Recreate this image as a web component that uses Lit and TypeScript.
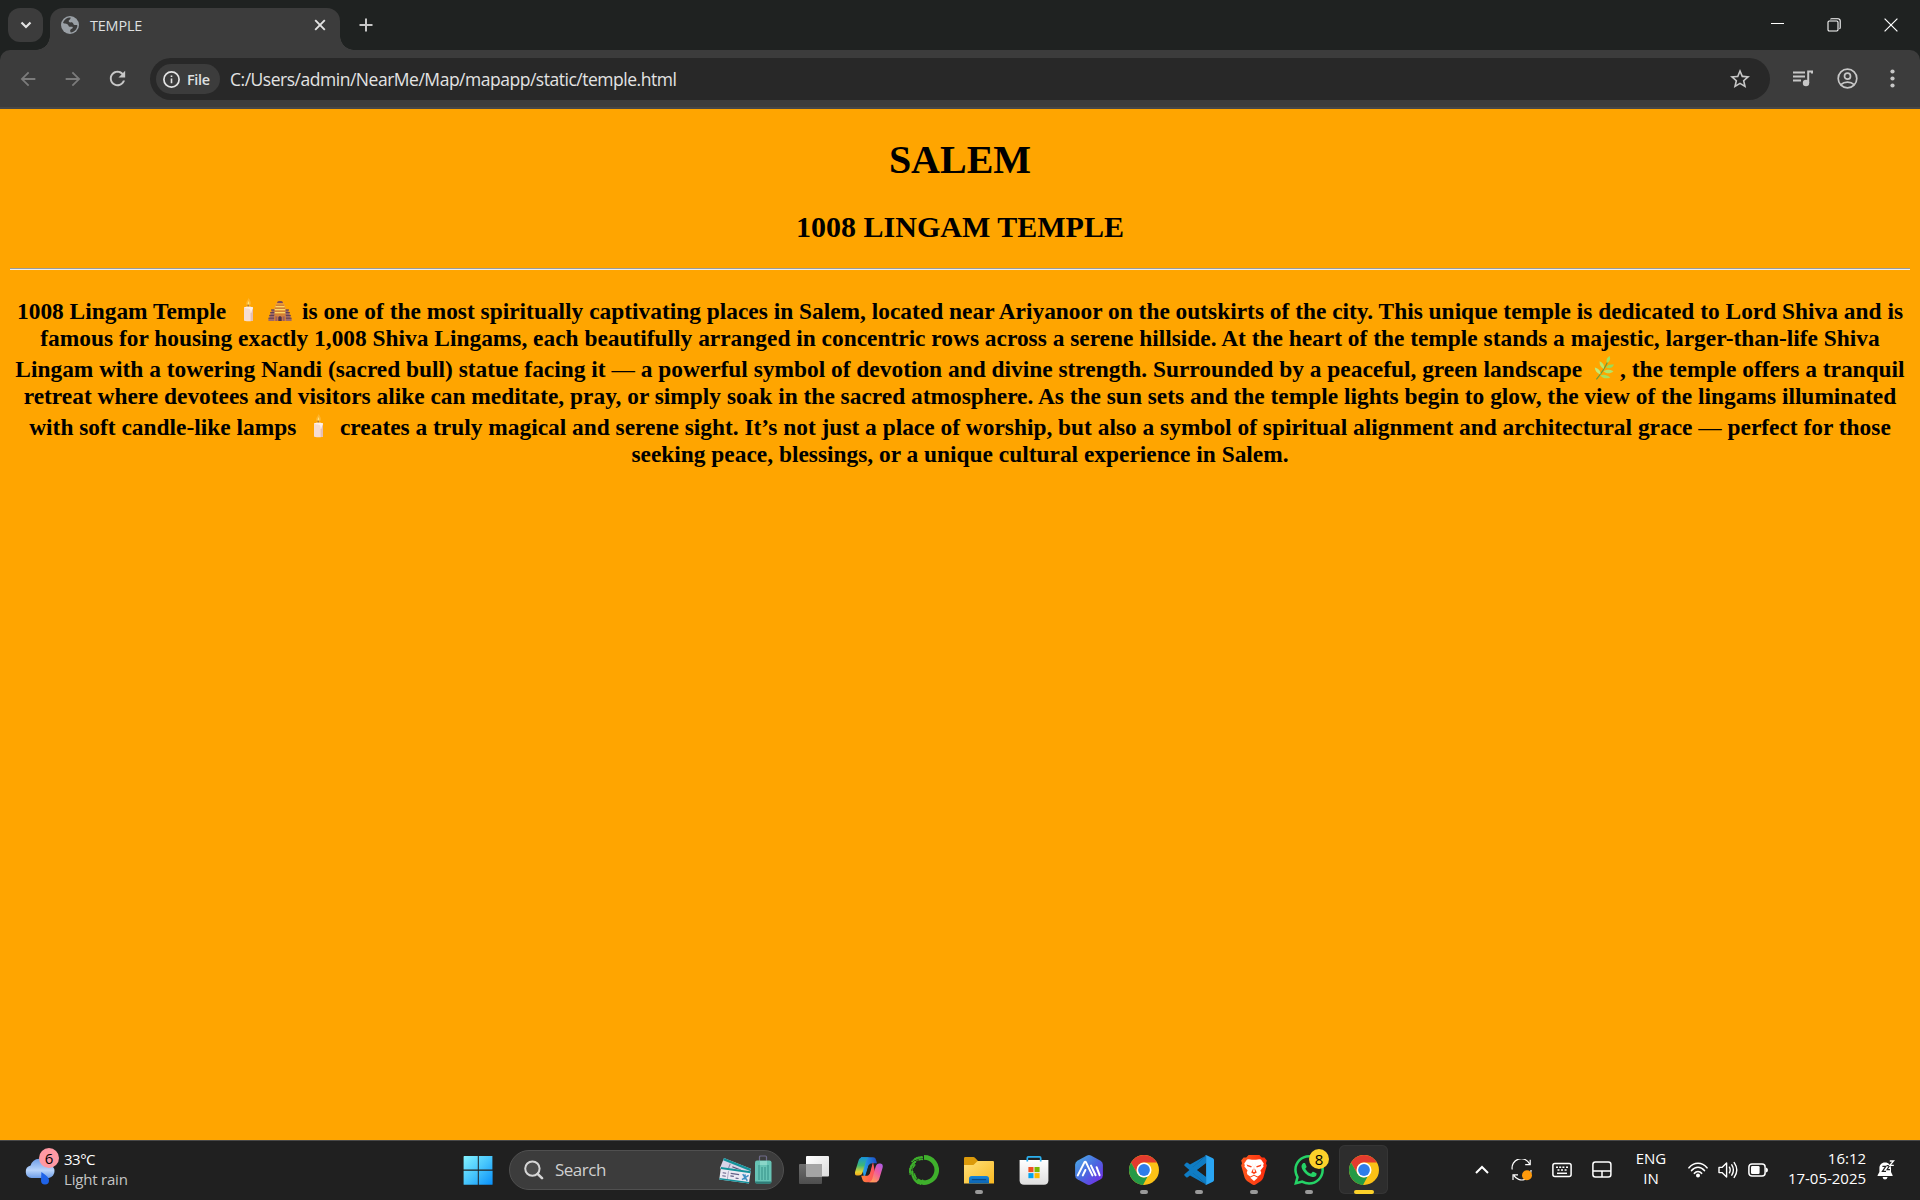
import { LitElement, html, css, svg } from "lit";
import { customElement } from "lit/decorators.js";

const candle = () => html`<svg class="emoji" viewBox="0 0 32 24">
  <path d="M16.5 0C18.6 3.2 19.6 4.6 18.6 6.6 17.8 8.2 15.2 8.2 14.4 6.6 13.4 4.4 15.6 3 16.5 0Z" fill="#ffb42e"/>
  <path d="M16.5 3C17.6 5 17.6 6.4 16.5 7 15.3 6.4 15.5 5 16.5 3Z" fill="#ffe27a"/>
  <path d="M16.2 6.5V9.5" stroke="#8a5a3c" stroke-width=".9"/>
  <path d="M12 9.6C12 8.4 21 8.4 21 9.6V22.4C21 23.4 12 23.4 12 22.4Z" fill="#f6ddd3"/>
  <path d="M18.6 9V23H20.4L21 22.4V9.6Z" fill="#e5bfb4"/>
  <path d="M12 9.6C13 10.6 17 10.4 18 11.4 18.6 12.4 18.2 15 19 15 19.8 15 19.6 12 21 10.2V9.6C21 8.4 12 8.4 12 9.6Z" fill="#fff0e8"/>
</svg>`;

const temple = () => html`<svg class="emoji" viewBox="0 0 32 24">
  <path d="M16 0L17.1 3H14.9Z" fill="#f5a70c"/>
  <path d="M13.2 4.2C13.2 2.6 18.8 2.6 18.8 4.2V5.4H13.2Z" fill="#7a4a5c"/>
  <path d="M12 5.2H20L22 10.5V19H10V10.5Z" fill="#f3a23a"/>
  <path d="M11.6 8.6H20.4M10.6 11.6H21.4M10 14.6H22" stroke="#ffd766" stroke-width="1.4"/>
  <path d="M11.8 7.2H20.2M10.8 10.2H21.2M10.2 13.2H21.8M10 16.2H22" stroke="#b8662e" stroke-width=".8"/>
  <path d="M7.6 11.5H10.4V23H4.4V20.5H5.4V17.5H6.4V14.5H7.6ZM24.4 11.5H21.6V23H27.6V20.5H26.6V17.5H25.6V14.5H24.4Z" fill="#a06a68"/>
  <path d="M7 12H10.4M6.2 14.6H10.4M5.2 17.4H10.4M4.4 20.2H10.4M21.6 12H25M21.6 14.6H25.8M21.6 17.4H26.8M21.6 20.2H27.6" stroke="#5d3a50" stroke-width="1"/>
  <path d="M10.4 17.2H21.6V23H10.4Z" fill="#cf7b40"/>
  <path d="M11.4 18.4H13.2V23H11.4ZM18.8 18.4H20.6V23H18.8Z" fill="#9d5f60"/>
  <path d="M14.3 23V19.8C14.3 17.8 17.7 17.8 17.7 19.8V23Z" fill="#4d3149"/>
</svg>`;

const herb = () => html`<svg class="emoji" viewBox="0 0 32 24">
  <path d="M8.4 23.4C12 19 16 14 19.6 6" stroke="#6f9a35" stroke-width="1.2" fill="none"/>
  <path d="M19 7C17.6 3.6 19.4 1.4 21.6 0 22.8 3 22 5.6 19 7Z" fill="#a9e05a"/>
  <path d="M18 11.4C20 8.4 22.8 8.2 26 8.6 24.6 12 21.6 13 18 11.4Z" fill="#9ddb55"/>
  <path d="M15.6 15.4C18.4 13.4 21.6 13.4 25.4 15.2 22.4 18 19 18 15.6 15.4Z" fill="#b5e566"/>
  <path d="M12.2 19.4C15.4 18 18.4 18.4 22.4 21.4 18.6 23.2 15 22.4 12.2 19.4Z" fill="#a9e05a"/>
  <path d="M16 12.8C12.6 11.4 11.4 8.8 11.6 5.2 15 6.8 16.6 9.2 16 12.8Z" fill="#b9e86c"/>
  <path d="M12.4 18.4C8.8 17 7 14.6 6.8 11.4 10.6 12.4 12.8 14.8 12.4 18.4Z" fill="#c2ec77"/>
</svg>`;

const chrome = () => html`<svg class="app" viewBox="0 0 30 30">
  <circle cx="15" cy="15" r="15" fill="#fbc116"/>
  <path d="M2.01 7.5A15 15 0 0 1 27.99 7.5H15A7.5 7.5 0 0 0 8 12.2L7.8 17.5Z" fill="#e33b2e"/>
  <path d="M2.01 7.5L8.5 18.75A7.5 7.5 0 0 0 15 22.5L18.6 21.6 14 29.97A15 15 0 0 1 2.01 7.5Z" fill="#249a46"/>
  <circle cx="15" cy="15" r="7.5" fill="#fff"/>
  <circle cx="15" cy="15" r="5.9" fill="#2f7de9"/>
</svg>`;

const start = () => html`<svg class="app" viewBox="0 0 30 30">
  <defs><linearGradient id="ws" gradientUnits="userSpaceOnUse" x1="1" y1="1" x2="29" y2="29">
    <stop offset="0" stop-color="#83f2ff"/><stop offset=".5" stop-color="#48c6fc"/><stop offset="1" stop-color="#0b92fa"/></linearGradient></defs>
  <path d="M1.2.9H14.8V14.6H.6V1.5ZM15.8.9H29.4V14.6H15.8ZM.6 15.7H14.8V29.8H.9L.6 29.4ZM15.8 15.7H29.6V29.4L29.2 29.8H15.8Z" fill="url(#ws)"/>
</svg>`;

const taskView = () => html`<svg class="app" viewBox="0 0 30 30">
  <defs><linearGradient id="tv" x1="0" y1="0" x2="1" y2="1"><stop offset="0" stop-color="#fff"/><stop offset="1" stop-color="#dcdcdc"/></linearGradient>
  <linearGradient id="tg" x1="0" y1="0" x2="0" y2="1"><stop offset="0" stop-color="#6e6e6e"/><stop offset="1" stop-color="#4e4e4e"/></linearGradient></defs>
  <rect x="0" y="9" width="23" height="20" rx="1" fill="url(#tg)"/>
  <rect x="7" y="1" width="23" height="20.5" rx="1" fill="url(#tv)"/>
  <rect x="7" y="9" width="16" height="12.5" fill="#a5a5a5"/>
</svg>`;

const copilot = () => html`<svg class="app" viewBox="0 0 30 30">
  <defs>
    <linearGradient id="c1" x1="0" y1="0" x2="0" y2="1"><stop offset="0" stop-color="#1695dc"/><stop offset=".45" stop-color="#3fb873"/><stop offset=".8" stop-color="#e8d22e"/><stop offset="1" stop-color="#f2a51c"/></linearGradient>
    <linearGradient id="c2" x1="1" y1="0" x2=".3" y2="1"><stop offset="0" stop-color="#a45cf0"/><stop offset=".5" stop-color="#ee5ba0"/><stop offset="1" stop-color="#ff9b58"/></linearGradient>
    <linearGradient id="c3" x1="0" y1="0" x2="1" y2="0"><stop offset="0" stop-color="#28b2ef"/><stop offset="1" stop-color="#1c49c5"/></linearGradient>
    <linearGradient id="c4" x1="0" y1="0" x2="1" y2="0"><stop offset="0" stop-color="#ff8034"/><stop offset="1" stop-color="#ff4769"/></linearGradient>
  </defs>
  <path d="M7 2.2H19C21 2.2 21.6 3.4 22.2 5.4L23 8.2H18.4C16 8.2 15 9.4 14.4 11.5L10 24Z" fill="url(#c3)"/>
  <path d="M23 27.2H12C9.8 27.2 9 26.2 8.2 24L7.2 20.8H12C14 20.8 15.2 20 16 18L19 7Z" fill="url(#c4)"/>
  <path d="M14.4 10.6L17.8 9 15.6 18.6 12 20.6Z" fill="#202020"/>
  <path d="M9 2.2H15.4C13.4 2.8 12.6 4 12 6L8.8 16.8C8 19.6 7 20.6 4.6 20.6H3C1 20.6.6 18.6 1.2 16.4L4.4 6C5.2 3.4 6.4 2.2 9 2.2Z" fill="url(#c1)"/>
  <path d="M21 27.2H15.2C17.2 26.6 17.8 25.6 18.4 23.6L21.4 12.6C22.2 9.8 23.2 8.4 25.4 8.4H26.4C28.6 8.4 29.2 10.6 28.6 12.8L25.4 23.6C24.6 26.2 23.4 27.2 21 27.2Z" fill="url(#c2)"/>
</svg>`;

const dots = Array.from({ length: 76 }, (_, i) => {
  const a = ((96 + ((i * 37) % 170)) * Math.PI) / 180;
  const r = 10.4 + ((i * 29) % 43) / 10;
  return svg`<circle cx=${15 + Math.cos(a) * r} cy=${15 + Math.sin(a) * r} r=${0.6 + (i % 3) * 0.3}></circle>`;
});
const anaconda = () => html`<svg class="app" viewBox="0 0 30 30">
  <path d="M15 2.4A12.6 12.6 0 1 1 8 25.4" fill="none" stroke="#3fb02c" stroke-width="4.6"/>
  <g fill="#3fb02c">${dots}</g>
</svg>`;

const explorer = () => html`<svg class="app" viewBox="0 0 30 30">
  <defs><linearGradient id="fe" x1="0" y1="0" x2="1" y2="1"><stop offset="0" stop-color="#ffe07a"/><stop offset="1" stop-color="#f9b921"/></linearGradient>
  <linearGradient id="fb" x1="0" y1="0" x2="0" y2="1"><stop offset="0" stop-color="#1686dc"/><stop offset="1" stop-color="#0c62ae"/></linearGradient></defs>
  <path d="M0 3.4C0 2.5.7 2 1.6 2H9.2C10 2 10.6 2.3 11.2 3L14 6V10H0Z" fill="#dc9a0a"/>
  <path d="M0 10H8.6C9.6 10 10 9.6 10.8 8.8L12.6 7C13 6.3 13.6 6 14.6 6H28.6C29.5 6 30 6.5 30 7.4V28.6H0Z" fill="url(#fe)"/>
  <path d="M5 28.6V23.6C5 22 6 21 7.6 21H22.4C24 21 25 22 25 23.6V28.6Z" fill="url(#fb)"/>
  <path d="M8.4 24.7H21.6" stroke="#0a4a86" stroke-width="1.3" stroke-linecap="round"/>
</svg>`;

const store = () => html`<svg class="app" viewBox="0 0 30 30">
  <defs><linearGradient id="st" x1="0" y1="0" x2="0" y2="1"><stop offset="0" stop-color="#fff"/><stop offset="1" stop-color="#dedede"/></linearGradient></defs>
  <path d="M.6 5H29.4V25.4C29.4 28.2 27.6 29.8 25 29.8H5C2.4 29.8.6 28.2.6 25.4Z" fill="url(#st)"/>
  <path d="M8.3 6.6V2.9C8.3 2.2 8.7 1.8 9.4 1.8H20.6C21.3 1.8 21.7 2.2 21.7 2.9V6.6" fill="none" stroke="#2bb0ee" stroke-width="1.7"/>
  <path d="M9.4 12H14.5V17.1H9.4Z" fill="#f05022"/><path d="M15.5 12H20.6V17.1H15.5Z" fill="#7db700"/>
  <path d="M9.4 18.1H14.5V23.2H9.4Z" fill="#00a3ee"/><path d="M15.5 18.1H20.6V23.2H15.5Z" fill="#fdb800"/>
</svg>`;

const hexApp = () => html`<svg class="app" viewBox="0 0 30 30">
  <defs><linearGradient id="hx" x1="0" y1="0" x2="1" y2="1"><stop offset="0" stop-color="#4db3e8"/><stop offset=".5" stop-color="#4a68e0"/><stop offset="1" stop-color="#7a22e8"/></linearGradient></defs>
  <path d="M12.6.7Q15-.5 17.4.7L26.6 5.8Q28.9 7.2 28.9 9.8V20.2Q28.9 22.8 26.6 24.2L17.4 29.3Q15 30.5 12.6 29.3L3.4 24.2Q1.1 22.8 1.1 20.2V9.8Q1.1 7.2 3.4 5.8Z" fill="url(#hx)"/>
  <path d="M3.8 20.4L10.4 7.4Q11.2 6.2 12 7.4L18.4 20.4M8.8 20.4L11.4 15M17 10.6L21.6 20.2M22.6 12.2L25.6 20.2" fill="none" stroke="#fff" stroke-width="2" stroke-linecap="round" stroke-linejoin="round"/>
</svg>`;

const vscode = () => html`<svg class="app" viewBox="0 0 30 30">
  <path d="M22.1.4L9.3 12.1 3.7 7.8Q2.9 7.2 2.2 7.8L.5 9.4Q-.1 10.1.5 10.8L22.1 29.6V21.8L6 9.6Z" fill="#0f7cc4"/>
  <path d="M22.1 29.6L9.3 17.9 3.7 22.2Q2.9 22.8 2.2 22.2L.5 20.6Q-.1 19.9.5 19.2L22.1.4V8.2L6 20.4Z" fill="#0f7cc4"/>
  <path d="M22.1 8.2V21.8L13.1 15Z" fill="#202020"/>
  <path d="M21.2.2Q21.8-.1 22.5.2L28.9 3.3Q30 3.9 30 5V25Q30 26.1 28.9 26.7L22.5 29.8Q21.6 30.2 20.9 29.5 22.1 29.9 22.1 28.4V1.6Q22.1.1 20.9.5Z" fill="#29a5f3"/>
</svg>`;

const brave = () => html`<svg class="app" viewBox="0 0 30 30">
  <defs><linearGradient id="br" x1="0" y1="0" x2="1" y2="0"><stop offset="0" stop-color="#ff5a1f"/><stop offset="1" stop-color="#fb2b0c"/></linearGradient></defs>
  <path d="M9.6 0H20.4L22.8 2.6 25.4 2.4 27.8 5.6 27 8.2 27.8 10.4 24.4 22.6Q23.8 24.6 22 25.9L16.6 29.5Q15 30.6 13.4 29.5L8 25.9Q6.2 24.6 5.6 22.6L2.2 10.4 3 8.2 2.2 5.6 4.6 2.4 7.2 2.6Z" fill="url(#br)"/>
  <path d="M9.8 4.2L13 4.8H17L20.2 4.2 22 4.6 24.8 8.6 24.2 10.2 24.6 11.4 21.4 15.4 22.2 17.6 21.6 19.6 18.8 21.4 16 20.2 15 19.6 14 20.2 11.2 21.4 8.4 19.6 7.8 17.6 8.6 15.4 5.4 11.4 5.8 10.2 5.2 8.6 8 4.6Z" fill="#fff"/>
  <path d="M7.6 9.4L12.8 11.2 12.2 12.6 8.4 11.2ZM22.4 9.4L17.2 11.2 17.8 12.6 21.6 11.2ZM13.6 7L14.2 13.6 12.2 17.6 15 19 17.8 17.6 15.8 13.6 16.4 7 15.6 14.6 16 16.6 15 17.2 14 16.6 14.4 14.6Z" fill="#fb3d15"/>
  <path d="M15 20.8L18.8 22.8 15 26 11.2 22.8Z" fill="#fff"/>
</svg>`;

const whatsapp = () => html`<svg class="app" viewBox="0 0 24 24"><path fill="#25d366" d="M17.472 14.382c-.297-.149-1.758-.867-2.03-.967-.273-.099-.471-.148-.67.15-.197.297-.767.966-.94 1.164-.173.199-.347.223-.644.075-.297-.15-1.255-.463-2.39-1.475-.883-.788-1.48-1.761-1.653-2.059-.173-.297-.018-.458.13-.606.134-.133.298-.347.446-.52.149-.174.198-.298.298-.497.099-.198.05-.371-.025-.52-.075-.149-.669-1.612-.916-2.207-.242-.579-.487-.5-.669-.51-.173-.008-.371-.01-.57-.01-.198 0-.52.074-.792.372-.272.297-1.04 1.016-1.04 2.479 0 1.462 1.065 2.875 1.213 3.074.149.198 2.096 3.2 5.077 4.487.709.306 1.262.489 1.694.625.712.227 1.36.195 1.871.118.571-.085 1.758-.719 2.006-1.413.248-.694.248-1.289.173-1.413-.074-.124-.272-.198-.57-.347m-5.421 7.403h-.004a9.87 9.87 0 01-5.031-1.378l-.361-.214-3.741.982.998-3.648-.235-.374a9.86 9.86 0 01-1.51-5.26c.001-5.45 4.436-9.884 9.888-9.884 2.64 0 5.122 1.03 6.988 2.898a9.825 9.825 0 012.893 6.994c-.003 5.45-4.437 9.884-9.885 9.884m8.413-18.297A11.815 11.815 0 0012.05 0C5.495 0 .16 5.335.157 11.892c0 2.096.547 4.142 1.588 5.945L.057 24l6.305-1.654a11.882 11.882 0 005.683 1.448h.005c6.554 0 11.89-5.335 11.893-11.893a11.821 11.821 0 00-3.48-8.413z"/></svg>`;

@customElement("browser-chrome")
class BrowserChrome extends LitElement {
  static styles = css`
    :host { display: flex; flex-direction: column; height: 109px; flex: none; background: #1f2221;
      font-family: "Open Sans", "Noto Sans", sans-serif; color: #dfe0e0; }
    svg { display: block; }
    .strip { display: flex; height: 50px; flex: none; }
    .menu { width: 35px; height: 34px; margin: 8px 7px 0 8px; border-radius: 12px; background: #3c3c3c;
      display: flex; align-items: center; justify-content: center; }
    .tab { position: relative; width: 290px; box-sizing: border-box; height: 42px; margin-top: 8px; border-radius: 13px 13px 0 0;
      background: #3c3c3c; display: flex; align-items: center; padding: 0 14px 8px 11px; }
    .tab::before, .tab::after { content: ""; position: absolute; bottom: 0; width: 14px; height: 14px; }
    .tab::before { left: -14px; background: radial-gradient(circle at 0 0, transparent 13.5px, #3c3c3c 14px); }
    .tab::after { right: -14px; background: radial-gradient(circle at 100% 0, transparent 13.5px, #3c3c3c 14px); }
    .title { flex: 1; margin: 1px 0 0 11px; font-size: 14.4px; line-height: 20px; letter-spacing: -0.15px; }
    .plus { margin: 18px 0 0 19px; }
    .controls { margin-left: auto; display: flex; height: 49px; align-items: center; }
    .ctl { width: 57px; display: flex; justify-content: center; }
    .restore { padding-right: 1px; width: 56px; margin-right: -1px; }
    .close { padding-right: 1px; width: 56px; margin-left: 1px; }
    .bar { flex: 1; display: flex; align-items: center; background: #3c3c3c; border-radius: 10px 10px 0 0;
      padding: 0 5px; border-bottom: 2px solid #474747; }
    .cell { width: 45px; display: flex; justify-content: center; }
    .omni { flex: 1; height: 42px; margin: 1px 10px 0 10px; border-radius: 21px; background: #282828; display: flex;
      align-items: center; padding: 0 19px 0 6px; box-sizing: border-box; }
    .chip { width: 64px; height: 30px; border-radius: 15px; background: #3c3c3c; display: flex; align-items: center;
      padding-left: 7px; box-sizing: border-box; gap: 7px; font-size: 14.4px; font-weight: 600; letter-spacing: -0.3px; }
    .url { flex: 1; margin-left: 10px; font-size: 17.5px; letter-spacing: -0.48px; color: #e3e3e3; white-space: nowrap; }
  `;
  render() {
    return html`
      <div class="strip">
        <div class="menu"><svg width="12" height="8" viewBox="0 0 12 8"><path d="M1.5 1.5L6 6 10.5 1.5" fill="none" stroke="#e3e3e3" stroke-width="2.2"/></svg></div>
        <div class="tab">
          <svg width="18" height="18" viewBox="0 0 18 18"><circle cx="9" cy="9" r="9" fill="#9aa0a6"/><path d="M9.6 1.6C7 1.2 3.4 3.2 2 6.6 3 8.4 5 7.6 6.4 8.2 7.8 8.8 7.2 10.6 8.8 10.8 10 11 11.6 10.4 11.8 11.6 12 13 9.6 12.8 9.2 14.2 9 15.2 9.6 16 9.8 16.4 13.4 16 16.2 13 16.4 9.4 15.4 8.4 14.4 9.4 13 8.8 12 8.2 12.6 6.8 11.2 6.4 10 6.2 8.4 6.8 7.8 5.6 7.2 4 9.8 4 9.6 1.6Z" fill="#3c3c3c"/><path d="M1.6 9.6C2.6 9.2 5 9.8 5.4 11 5.8 12.4 7 13 6.8 15.8 3.8 15 1.8 12.4 1.6 9.6Z" fill="#9aa0a6"/></svg>
          <span class="title">TEMPLE</span>
          <svg width="12" height="12" viewBox="0 0 12 12"><path d="M1.2 1.2L10.8 10.8M10.8 1.2L1.2 10.8" stroke="#e3e3e3" stroke-width="1.9"/></svg>
        </div>
        <svg class="plus" width="14" height="14" viewBox="0 0 14 14"><path d="M7 .5V13.5M.5 7H13.5" stroke="#c7c7c7" stroke-width="2"/></svg>
        <div class="controls">
          <div class="ctl"><svg width="13" height="13" viewBox="0 0 13 13"><path d="M0 5.5H13" stroke="#fff" stroke-width="1"/></svg></div>
          <div class="ctl restore"><svg width="14" height="14" viewBox="0 0 14 14"><rect x="1" y="3" width="10" height="10" rx="1.2" fill="none" stroke="#fff" stroke-width="1.1"/><path d="M3.5 1.4Q3.8.7 4.6.7H11Q13.2.7 13.2 3V9.5Q13.2 10.5 12.4 10.8" fill="none" stroke="#fff" stroke-width="1.1"/></svg></div>
          <div class="ctl close"><svg width="14" height="14" viewBox="0 0 14 14"><path d="M.6.6L13.4 13.4M13.4.6L.6 13.4" stroke="#fff" stroke-width="1.2"/></svg></div>
        </div>
      </div>
      <div class="bar">
        <div class="cell"><svg width="22" height="22" viewBox="0 0 24 24"><path fill="#7b7b7b" d="M20 11H7.83l5.59-5.59L12 4l-8 8 8 8 1.41-1.41L7.83 13H20v-2z"/></svg></div>
        <div class="cell"><svg width="22" height="22" viewBox="0 0 24 24"><path fill="#7b7b7b" d="M12 4l-1.41 1.41L16.17 11H4v2h12.17l-5.58 5.59L12 20l8-8z"/></svg></div>
        <div class="cell"><svg width="23" height="23" viewBox="0 0 24 24"><path fill="#c7c7c7" d="M17.65 6.35C16.2 4.9 14.21 4 12 4c-4.42 0-7.99 3.58-7.99 8s3.57 8 7.99 8c3.73 0 6.84-2.55 7.73-6h-2.08c-.82 2.33-3.04 4-5.65 4-3.31 0-6-2.69-6-6s2.69-6 6-6c1.66 0 3.14.69 4.22 1.78L13 11h7V4l-2.35 2.35z"/></svg></div>
        <div class="omni">
          <div class="chip"><svg width="17" height="17" viewBox="0 0 17 17"><circle cx="8.5" cy="8.5" r="7.6" fill="none" stroke="#e3e3e3" stroke-width="1.7"/><path d="M8.5 7.4V12.3M8.5 4.4V6" stroke="#e3e3e3" stroke-width="1.6"/></svg><span>File</span></div>
          <span class="url">C:/Users/admin/NearMe/Map/mapapp/static/temple.html</span>
          <svg width="22" height="22" viewBox="1 1 22 22"><path fill="#c7c7c7" d="M22 9.24l-7.19-.62L12 2 9.19 8.63 2 9.24l5.46 4.73L5.82 21 12 17.27 18.18 21l-1.63-7.03L22 9.24zM12 15.4l-3.76 2.27 1-4.28-3.32-2.88 4.38-.38L12 6.1l1.71 4.04 4.38.38-3.32 2.88 1 4.28L12 15.4z"/></svg>
        </div>
        <div class="cell"><svg width="21" height="18" viewBox="0 0 21 18"><path d="M1 2.5H13M1 6.5H13M1 10.5H9" stroke="#c7c7c7" stroke-width="1.9"/><path d="M16.2 13V1.6H20V3.6" fill="none" stroke="#c7c7c7" stroke-width="2"/><circle cx="14" cy="13" r="3.2" fill="#c7c7c7"/></svg></div>
        <div class="cell"><svg width="21" height="21" viewBox="0 0 21 21" fill="none" stroke="#c7c7c7" stroke-width="1.7"><circle cx="10.5" cy="10.5" r="9.3"/><circle cx="10.5" cy="8.2" r="3"/><path d="M3.9 16.6C7.4 13.3 13.6 13.3 17.1 16.6"/></svg></div>
        <div class="cell"><svg width="5" height="19" viewBox="0 0 5 19" fill="#c7c7c7"><circle cx="2.5" cy="2.5" r="2.1"/><circle cx="2.5" cy="9.5" r="2.1"/><circle cx="2.5" cy="16.5" r="2.1"/></svg></div>
      </div>`;
  }
}

@customElement("temple-page")
class TemplePage extends LitElement {
  static styles = css`
    :host { display: block; flex: 1; background: #ffa500; color: #000; padding: 0 10px; text-align: center;
      font-family: "Liberation Serif", "Times New Roman", serif; font-weight: bold; overflow: hidden; }
    h1 { margin: 28px 0 0; font-size: 40px; line-height: 46px; }
    h2 { margin: 27px 0 0; font-size: 30px; line-height: 34px; }
    .rule { margin: 24px 0 24px; height: 1px; border-top: 1px solid #9a9a9a; background: #eeeeee; }
    .line { font-size: 23.4px; line-height: 27px; height: 27px; white-space: nowrap; display: block; }
    .tall { padding-top: 4px; }
    .emoji { width: 32px; height: 24px; vertical-align: -3px; }
    .dash { font-weight: normal; }
  `;
  render() {
    return html`
      <h1>SALEM</h1>
      <h2>1008 LINGAM TEMPLE</h2>
      <div class="rule"></div>
      <div>
        <span class="line tall">1008 Lingam Temple ${candle()}${temple()} is one of the most spiritually captivating places in Salem, located near Ariyanoor on the outskirts of the city. This unique temple is dedicated to Lord Shiva and is</span>
        <span class="line">famous for housing exactly 1,008 Shiva Lingams, each beautifully arranged in concentric rows across a serene hillside. At the heart of the temple stands a majestic, larger-than-life Shiva</span>
        <span class="line tall">Lingam with a towering Nandi (sacred bull) statue facing it <span class="dash">—</span> a powerful symbol of devotion and divine strength. Surrounded by a peaceful, green landscape ${herb()}, the temple offers a tranquil</span>
        <span class="line">retreat where devotees and visitors alike can meditate, pray, or simply soak in the sacred atmosphere. As the sun sets and the temple lights begin to glow, the view of the lingams illuminated</span>
        <span class="line tall">with soft candle-like lamps ${candle()} creates a truly magical and serene sight. It’s not just a place of worship, but also a symbol of spiritual alignment and architectural grace <span class="dash">—</span> perfect for those</span>
        <span class="line">seeking peace, blessings, or a unique cultural experience in Salem.</span>
      </div>`;
  }
}

@customElement("task-bar")
class TaskBar extends LitElement {
  static styles = css`
    :host { display: flex; height: 60px; flex: none; box-sizing: border-box; background: #202020; border-top: 1px solid #484848;
      padding-bottom: 2px; font-family: "Open Sans", "Noto Sans", sans-serif; font-size: 15px; color: #fff; align-items: center; }
    svg { display: block; }
    .weather { width: 450px; display: flex; padding-left: 24px; box-sizing: border-box; gap: 8px; line-height: 20px; }
    .wicon { position: relative; width: 32px; height: 40px; }
    .badge { position: absolute; width: 20px; height: 20px; border-radius: 50%; text-align: center; line-height: 20px;
      font-size: 15px; color: #000; }
    .pink { left: 15px; top: -2px; background: #ff99a4; }
    .yellow { right: 7px; top: 8px; background: #fcd12a; }
    .temps { margin-top: -1px; }
    .temp { letter-spacing: -0.5px; }
    .dim { color: #c4c4c4; letter-spacing: -0.2px; }
    .item { position: relative; width: 55px; height: 57px; display: flex; align-items: center; justify-content: center; flex: none; }
    .active { width: 49px; height: 49px; margin: 0 3px; border-radius: 6px; background: #2d2d2d; box-shadow: inset 0 0 0 1px #353535; }
    .app { width: 30px; height: 30px; }
    .dot { position: absolute; bottom: 4px; left: 50%; width: 8px; height: 4px; margin-left: -4px; border-radius: 2px; background: #9a9a9a; }
    .active .dot { bottom: 0; width: 20px; margin-left: -10px; background: #fcd12a; }
    .search { width: 275px; height: 40px; box-sizing: border-box; border-radius: 20px; background: #3c3c3c; border: 1px solid #505050;
      margin: 0 2px 0 4px; display: flex; align-items: center; padding: 0 11px 0 14px; font-size: 17px; color: #d0d0d0; }
    .label { flex: 1; margin-left: 11px; letter-spacing: -0.5px; }
    .tray { margin-left: auto; display: flex; align-items: center; height: 57px; }
    .t { display: flex; justify-content: center; width: 40px; }
    .lang { width: 58px; text-align: center; line-height: 20px; margin: 0 3px 3px 0; }
    .clock { text-align: right; line-height: 20px; width: 93px; letter-spacing: -0.02px; white-space: nowrap; margin-bottom: 3px; }
    .bell { margin: 0 25px 0 11px; }
    .s { width: 30px; display: flex; justify-content: center; }
  `;
  item(icon: unknown, running = false) {
    return html`<div class="item">${icon}${running ? html`<span class="dot"></span>` : ""}</div>`;
  }
  render() {
    return html`
      <div class="weather">
        <div class="wicon">
          <svg width="32" height="40" viewBox="0 0 32 40"><defs><linearGradient id="cl" x1="0" y1="0" x2="0" y2="1"><stop offset="0" stop-color="#6f9ee8"/><stop offset=".6" stop-color="#b8d4fb"/><stop offset="1" stop-color="#6d9de8"/></linearGradient></defs>
          <path d="M7.5 28A6.3 6.3 0 0 1 6.6 15.6 9.6 9.6 0 0 1 24.5 14.4 6.9 6.9 0 0 1 25 28Z" fill="url(#cl)"/><path d="M17.4 22C21 24.6 25.2 27 25 30.4A4 4 0 0 1 17 30.4Z" fill="#1f63e8"/></svg>
          <span class="badge pink">6</span>
        </div>
        <div class="temps"><div class="temp">33°C</div><div class="dim">Light rain</div></div>
      </div>
      ${this.item(start())}
      <div class="search">
        <svg width="20" height="20" viewBox="0 0 20 20"><circle cx="8.4" cy="8.6" r="7.2" fill="#4c4c4c" stroke="#d6d6d6" stroke-width="2"/><path d="M13.6 13.8L18 18.2" stroke="#d6d6d6" stroke-width="2.6" stroke-linecap="round"/></svg>
        <span class="label">Search</span>
        <svg width="54" height="30" viewBox="0 0 54 30">
          <g transform="translate(6 3) rotate(22)"><rect width="29" height="11" fill="#d9d4e8"/><rect width="29" height="2.4" fill="#13929a"/><path d="M8 3V11" stroke="#8a86a6"/><path d="M11 5H20M11 7.5H17" stroke="#59567c" stroke-width="1.2"/></g>
          <g transform="translate(3 12) rotate(8)"><rect width="30" height="12.5" fill="#eceaf3"/><rect width="30" height="2" fill="#13929a"/><rect y="11" width="30" height="1.5" fill="#13929a"/><path d="M8 3V11" stroke="#aaa6c0"/><path d="M2.5 5.5H6M2.5 8.5H6M10.5 5H19M10.5 7.5H14M16 9H19" stroke="#625f86" stroke-width="1.1"/><path d="M22.5 4L28 10M28.5 4.5L22.5 9.5M25 4V9" stroke="#3d8fc4" stroke-width="1.5"/></g>
          <path d="M41.5 6V2Q41.5 1 42.5 1H47.5Q48.5 1 48.5 2V6" fill="none" stroke="#6e6a88" stroke-width="1.2"/>
          <rect x="37" y="5.5" width="16.5" height="23" rx="2" fill="#67c3b5"/><path d="M37 26.6H53.5V27Q53.5 28.8 51.5 28.8H39Q37 28.8 37 27Z" fill="#2e7d78"/><path d="M41 10V25M44 12V25M47 12V25M50 10V25" stroke="#358f86" stroke-width="1"/><path d="M42 6H49V10H42Z" fill="#8ad6c8"/>
        </svg>
      </div>
      ${this.item(taskView())}${this.item(copilot())}${this.item(anaconda())}${this.item(explorer(), true)}
      ${this.item(store())}${this.item(hexApp())}${this.item(chrome(), true)}${this.item(vscode(), true)}
      ${this.item(brave(), true)}
      <div class="item">${whatsapp()}<span class="badge yellow">8</span><span class="dot"></span></div>
      <div class="item active">${chrome()}<span class="dot"></span></div>
      <div class="tray">
        <div class="t"><svg width="14" height="9" viewBox="0 0 14 9"><path d="M1 8L7 2 13 8" fill="none" stroke="#fff" stroke-width="2"/></svg></div>
        <div class="t"><svg width="22" height="22" viewBox="0 0 22 22"><path d="M1.2 10.5A9.2 9.2 0 0 1 18.6 5M19.2.8V5.6H14.2M20 11A9.2 9.2 0 0 1 3 16.6M2 21V15.8H7" fill="none" stroke="#fff" stroke-width="1.2"/><circle cx="16" cy="16.2" r="5" fill="#ff9a0c"/></svg></div>
        <div class="t"><svg width="20" height="16" viewBox="0 0 20 16"><rect x=".9" y="1.5" width="18.2" height="13" rx="2" fill="none" stroke="#fff" stroke-width="1.5"/><path d="M4 5.2H6M7.2 5.2H9.2M10.4 5.2H12.4M14 5.2H16M5.5 8H7.5M9 8H11M12.6 8H14.6" stroke="#fff" stroke-width="1.6"/><path d="M5 11.3H15" stroke="#fff" stroke-width="1.5"/></svg></div>
        <div class="t"><svg width="20" height="17" viewBox="0 0 20 17"><rect x=".9" y=".9" width="18" height="15" rx="2.5" fill="none" stroke="#fff" stroke-width="1.5"/><path d="M1 10H19M10 10V16" stroke="#fff" stroke-width="1.5"/></svg></div>
        <div class="lang">ENG<br />IN</div>
        <div class="s"><svg width="20" height="16" viewBox="0 0 20 16" fill="none" stroke="#fff" stroke-width="1.6" stroke-linecap="round"><path d="M1 5.8C6-.2 14-.2 19 5.8M3.6 8.6C7.2 4.2 12.8 4.2 16.4 8.6M6.4 11.3C8.4 8.8 11.6 8.8 13.6 11.3"/><circle cx="10" cy="13.6" r="1.2" fill="#fff"/></svg></div>
        <div class="s"><svg width="20" height="18" viewBox="0 0 20 18" fill="none" stroke="#fff" stroke-width="1.4" stroke-linecap="round" stroke-linejoin="round"><path d="M1 6.4H4L8.6 2V16L4 11.6H1ZM11.4 6.2Q13 9 11.4 11.8M13.8 3.8Q17 9 13.8 14.2M16.2 1.6Q21.4 9 16.2 16.4"/></svg></div>
        <div class="s"><svg width="20" height="14" viewBox="0 0 20 14"><rect x=".9" y=".9" width="16.2" height="12.2" rx="3" fill="none" stroke="#fff" stroke-width="1.5"/><rect x="3" y="3" width="8.6" height="8" rx="1.2" fill="#fff"/><path d="M18 4.5Q20 5 20 7T18 9.5Z" fill="#fff"/></svg></div>
        <div class="clock">16:12<br />17-05-2025</div>
        <svg class="bell" width="18" height="20" viewBox="0 0 18 20"><path d="M8 2.4C4.4 2.4 2.4 5 2.4 8V12L.6 15.2V16H15.6V15.2L14 12V8C14 5 11.6 2.4 8 2.4ZM5.6 17H10.6Q10 19.6 8 19.6T5.6 17Z" fill="#fff"/><path d="M11 0H18V6H13Z" fill="#202020"/><path d="M5.4 6.4H8.8L5.4 11.4H9" fill="none" stroke="#202020" stroke-width="1.2"/><path d="M9.6 5.6H12.6L10 9.6H13" fill="none" stroke="#202020" stroke-width="1.1"/><path d="M12.8 1H16.6L12.8 5.4H16.8" fill="none" stroke="#fff" stroke-width="1.3"/></svg>
      </div>`;
  }
}

@customElement("app-root")
class AppRoot extends LitElement {
  static styles = css`
    :host { display: flex; flex-direction: column; width: 1920px; height: 1200px; overflow: hidden; }
  `;
  render() {
    return html`<browser-chrome></browser-chrome><temple-page></temple-page><task-bar></task-bar>`;
  }
}
